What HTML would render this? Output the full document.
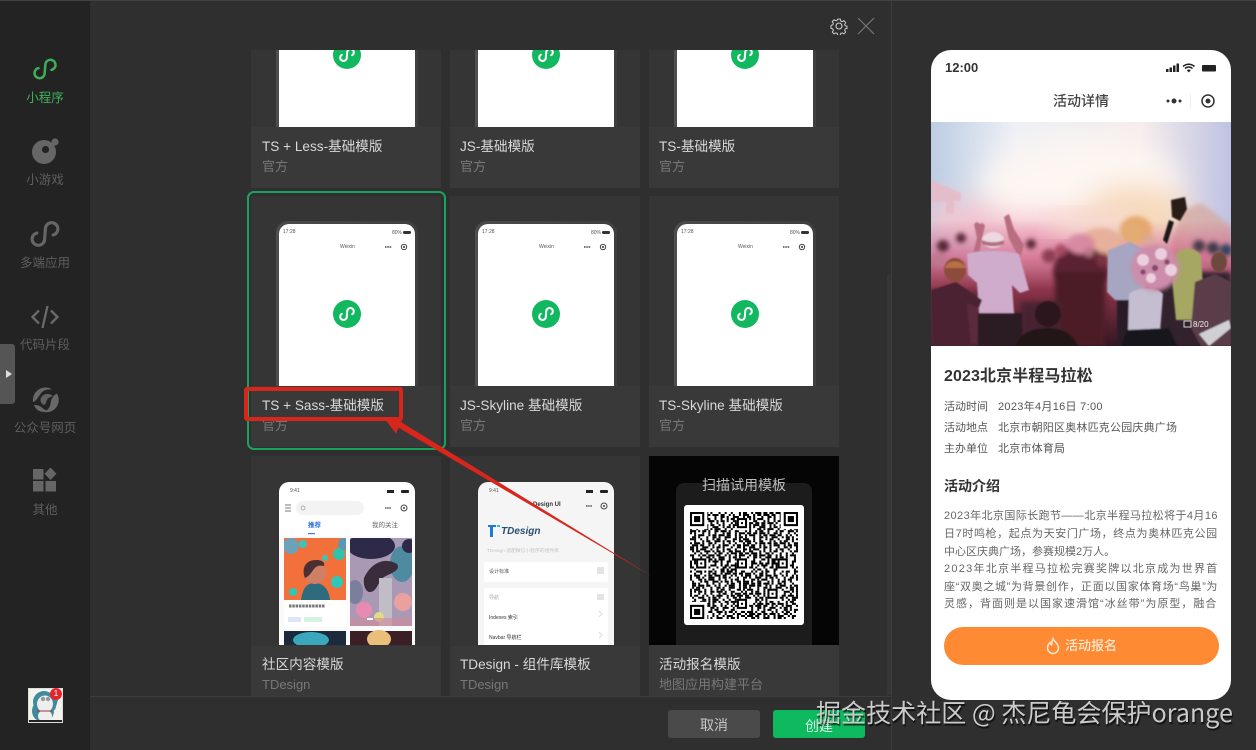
<!DOCTYPE html>
<html lang="zh"><head><meta charset="utf-8"><title>新建项目</title>
<style>
*{box-sizing:border-box;margin:0;padding:0}
html,body{width:1256px;height:750px;overflow:hidden;background:#2f2f2f;font-family:"Liberation Sans","Noto Sans CJK SC",sans-serif}
.a{position:absolute}
#side{left:0;top:0;width:90px;height:750px;background:#232323}
.si{position:absolute;left:0;width:90px;text-align:center;font-size:12.5px;color:#5e5e5e;line-height:16px}
.si svg{position:absolute}
#list{left:240px;top:50px;width:605px;height:646px;overflow:hidden}
.card{position:absolute;width:190px;height:251px;background:#393939;overflow:hidden}
.card .top{position:absolute;left:0;top:0;width:190px;height:190px;background:#353535}
.phone{position:absolute;left:25px;top:25px;width:142px;height:165px;background:linear-gradient(90deg,#525252 0,#4a4a4a 3px,#3f3f3f 100%);border-radius:12px 12px 0 0;padding:3px 3px 0}
.scr{position:relative;width:136px;height:162px;background:#fff;border-radius:10px 10px 0 0;overflow:hidden}
.t{position:absolute;left:11px;top:201px;font-size:13.6px;line-height:18px;color:#d8d8d8;white-space:nowrap}
.s{position:absolute;left:11px;top:221px;font-size:13px;line-height:18px;color:#787878;white-space:nowrap}
.c2 .t,.c2 .s{left:10px}
.r2 .t{top:200px}.r2 .s{top:220px}
.tiny{position:absolute;font-size:5px;line-height:6px;color:#555;white-space:nowrap}
.logo{position:absolute;left:54px;top:76px}
.p{position:absolute;color:#555;font-size:11px;line-height:21px;white-space:nowrap}
.b{position:absolute;left:13px;font-size:11px;line-height:17.7px;color:#666;white-space:nowrap}
</style></head><body>

<!-- sidebar -->
<div class="a" id="side"></div>
<div class="a" style="left:90px;top:0;width:801px;height:750px;background:#2f2f2f"></div>
<div class="a" style="left:891px;top:0;width:1px;height:750px;background:#3c3c3c"></div>
<div class="a" style="left:0;top:0;width:1256px;height:1px;background:#414141"></div>
<div class="a" style="left:887px;top:275px;width:4px;height:420px;background:#363636"></div>

<div class="si" style="top:90px;color:#3fb35a">小程序</div>
<svg class="a" style="left:32px;top:56px" width="26" height="26" viewBox="0 0 24 24" fill="none" stroke="#3fae57" stroke-width="2.3" stroke-linecap="round"><path d="M6 11.200A4.700 4.700 0 1 0 11.700 15.700L12.300 8.300A4.700 4.700 0 1 1 18 12.800"/></svg>

<div class="si" style="top:172px">小游戏</div>
<svg class="a" style="left:30px;top:136px" width="32" height="30" viewBox="0 0 32 30"><circle cx="14" cy="16" r="12" fill="#666"/><circle cx="15.500" cy="13.500" r="3.600" fill="#232323"/><circle cx="25" cy="6" r="3.600" fill="#666"/></svg>

<div class="si" style="top:255px">多端应用</div>
<svg class="a" style="left:30px;top:219px" width="30" height="30" viewBox="0 0 24 24" fill="none" stroke="#666" stroke-width="2.500" stroke-linecap="round"><path d="M5.500 11.200A5 5 0 1 0 11.700 16L12.300 8A5 5 0 1 1 18.500 12.800"/></svg>

<div class="si" style="top:337px">代码片段</div>
<svg class="a" style="left:30px;top:304px" width="30" height="26" viewBox="0 0 30 26" fill="none" stroke="#6a6a6a" stroke-width="2.300"><path d="M9 6.500L2.500 13 9 19.500M21 6.500L27.500 13 21 19.500M17.500 2L12.500 24"/></svg>

<div class="si" style="top:420px">公众号网页</div>
<svg class="a" style="left:31px;top:386px" width="28" height="28" viewBox="0 0 28 28" fill="#686868"><path d="M2 16C1 8 7 1.500 14.500 1.500c3 0 5 .8 6.500 2-5-.5-9 1-11.500 4.500C7 11 6 14.500 2 16z"/><path d="M26 7.500c2.500 4.500 2.300 10-.5 13.500-2.700 4-8 6-12.500 5 3.500-1.500 6-4.500 6.500-8 .4-4.500 2.500-8.500 6.500-10.500z"/><path d="M3 19c3.500-.3 6.500 1 9 3.500 1.500 1.300 3.500 2 5 2-2.500 1.500-6.500 2-9.500 0C5.500 23.500 4 21.500 3 19z"/><path d="M9.500 13c1-3.500 4.500-5.500 8-5 2 .3 3.300 1 4.500 2.500-3.500.2-5.500 2-6.500 4.500-.5 1.500-1 3-2 4-2.500-.5-4.500-3-4-6z" opacity=".9"/></svg>

<div class="si" style="top:502px">其他</div>
<svg class="a" style="left:32px;top:467px" width="26" height="26" viewBox="0 0 26 26" fill="#666"><rect x="1" y="2" width="10.500" height="10.500"/><rect x="1" y="14" width="10.500" height="10.500"/><rect x="13.500" y="14" width="10.500" height="10.500"/><path d="M18.500 0.500L24.500 6.800 18.500 13 12.500 6.800z"/></svg>

<div class="a" style="left:0;top:344px;width:15px;height:60px;background:#555;border-radius:0 3px 3px 0"></div>
<div class="a" style="left:6px;top:370px;width:0;height:0;border-left:6px solid #ddd;border-top:4px solid transparent;border-bottom:4px solid transparent"></div>

<!-- avatar -->
<div class="a" style="left:28px;top:688px;width:35px;height:35px;background:#f3f3ee;overflow:hidden;border:1px solid #ddd">
<svg width="33" height="33" viewBox="0 0 33 33"><ellipse cx="14" cy="22" rx="11" ry="11" fill="#3d8b9b"/><circle cx="15" cy="13" r="11" fill="#3d8b9b"/><ellipse cx="16" cy="15" rx="8" ry="8.500" fill="#eee"/><ellipse cx="16" cy="27" rx="7" ry="6" fill="#eee"/><circle cx="14" cy="10" r="2.200" fill="#999"/><circle cx="19" cy="10" r="2.200" fill="#999"/><path d="M8 22h15" stroke="#a33" stroke-width="1"/><path d="M26 10l-3 10 3 1 3-10z" fill="#3d8b9b"/><rect x="0" y="31" width="33" height="2" fill="#222"/></svg>
</div>
<div class="a" style="left:50px;top:688px;width:12px;height:12px;background:#e3242b;border-radius:50%;color:#fff;font-size:8px;line-height:12px;text-align:center">1</div>

<!-- header icons -->
<svg class="a" style="left:830px;top:17px" width="18" height="18" viewBox="0 0 18 18" fill="none" stroke="#cfcfcf" stroke-width="1.100"><path d="M7.500 1.200h3l.5 2.200 1.600.7 2-1.200 2 2.200-1.200 1.900.6 1.700 2.100.5v0 2.600l-2.100.5-.6 1.700 1.200 1.900-2 2-2-1.100-1.600.6-.5 2.200h-3l-.5-2.200-1.600-.6-2 1.100-2-2 1.200-1.900-.7-1.700-2-.5V8.200l2-.5.7-1.700L1.300 4.100l2-2.200 2 1.200 1.600-.7z" transform="translate(1.100 1.100) scale(.88)"/><circle cx="9" cy="9" r="3"/></svg>
<svg class="a" style="left:857px;top:17px" width="18" height="18" viewBox="0 0 18 18" stroke="#777" stroke-width="1.100"><path d="M1 1L17 17M17 1L1 17"/></svg>

<!-- cards -->
<div class="a" id="list">
<svg width="0" height="0" style="position:absolute"><defs>
<g id="lg"><circle cx="14" cy="14" r="14" fill="#11b85f"/><path d="M8.800 13.800A3.300 3.300 0 1 0 13.800 16.600L14.200 11.400A3.300 3.300 0 1 1 19.200 14.200" fill="none" stroke="#fff" stroke-width="2" stroke-linecap="round"/></g>
<g id="hd"><rect x="124" y="7" width="8" height="3" fill="#333" rx="1.200"/><circle cx="125" cy="23" r="2.700" fill="none" stroke="#333" stroke-width=".9"/><circle cx="125" cy="23" r="1" fill="#333"/><path d="M106 23h7" stroke="#222" stroke-width="1.300" stroke-dasharray="1.500 .8"/></g>
</defs></svg>

<!-- row 0 -->
<div class="card" style="left:11px;top:-113px"><div class="top"></div><div class="phone"><div class="scr"><svg class="logo" width="28" height="28"><use href="#lg"/></svg></div></div><div class="t">TS + Less-基础模版</div><div class="s">官方</div></div>
<div class="card c2" style="left:210px;top:-113px"><div class="top"></div><div class="phone"><div class="scr"><svg class="logo" width="28" height="28"><use href="#lg"/></svg></div></div><div class="t">JS-基础模版</div><div class="s">官方</div></div>
<div class="card c2" style="left:409px;top:-113px"><div class="top"></div><div class="phone"><div class="scr"><svg class="logo" width="28" height="28"><use href="#lg"/></svg></div></div><div class="t">TS-基础模版</div><div class="s">官方</div></div>

<!-- row 1 -->
<div class="card" style="left:11px;top:146px"><div class="top"></div><div class="phone"><div class="scr"><div class="tiny" style="left:4px;top:5px">17:28</div><div class="tiny" style="left:61px;top:20px">Weixin</div><div class="tiny" style="left:113px;top:6px">80%</div><svg width="136" height="30" style="position:absolute;left:0;top:0"><use href="#hd"/></svg><svg class="logo" width="28" height="28"><use href="#lg"/></svg></div></div><div class="t">TS + Sass-基础模版</div><div class="s">官方</div></div>
<div class="card c2" style="left:210px;top:146px"><div class="top"></div><div class="phone"><div class="scr"><div class="tiny" style="left:4px;top:5px">17:28</div><div class="tiny" style="left:61px;top:20px">Weixin</div><div class="tiny" style="left:113px;top:6px">80%</div><svg width="136" height="30" style="position:absolute;left:0;top:0"><use href="#hd"/></svg><svg class="logo" width="28" height="28"><use href="#lg"/></svg></div></div><div class="t">JS-Skyline 基础模版</div><div class="s">官方</div></div>
<div class="card c2" style="left:409px;top:146px"><div class="top"></div><div class="phone"><div class="scr"><div class="tiny" style="left:4px;top:5px">17:28</div><div class="tiny" style="left:61px;top:20px">Weixin</div><div class="tiny" style="left:113px;top:6px">80%</div><svg width="136" height="30" style="position:absolute;left:0;top:0"><use href="#hd"/></svg><svg class="logo" width="28" height="28"><use href="#lg"/></svg></div></div><div class="t">TS-Skyline 基础模版</div><div class="s">官方</div></div>
<div class="a" style="left:7px;top:141px;width:199px;height:259px;border:2px solid #1aa35c;border-radius:7px"></div>

<!-- row 2 -->
<div class="card r2" style="left:11px;top:406px"><div class="top"></div><div class="scr" style="position:absolute;left:28px;top:26px;height:163px">
<div class="tiny" style="left:11px;top:6px">9:41</div>
<svg width="136" height="163" style="position:absolute;left:0;top:0" viewBox="0 0 136 163">
<rect x="108" y="8" width="7" height="3" fill="#222"/><rect x="122" y="8" width="8" height="3" rx="1" fill="#222"/>
<path d="M6 23h6M6 26h6M6 29h6" stroke="#777" stroke-width=".9"/>
<rect x="17" y="19" width="68" height="14" rx="7" fill="#f3f3f3"/><circle cx="24" cy="26" r="2" fill="none" stroke="#999" stroke-width=".7"/>
<path d="M106 26h6" stroke="#333" stroke-width="1.300" stroke-dasharray="1.500 .7"/><circle cx="125" cy="26" r="3" fill="none" stroke="#444"/><circle cx="125" cy="26" r="1" fill="#444"/>
<rect x="29" y="51" width="7" height="1.200" fill="#3b78e8"/>
<rect x="0" y="54" width="136" height="109" fill="#fafafa"/>
<g><clipPath id="c1"><rect x="5" y="56" width="62" height="62"/></clipPath>
<rect x="5" y="56" width="62" height="62" fill="#f2703a"/>
<g clip-path="url(#c1)"><circle cx="12" cy="64" r="8" fill="#6ca2b9"/><circle cx="24" cy="62" r="4" fill="#3cc4b9"/><circle cx="60" cy="72" r="6" fill="#2fc3ae"/><circle cx="58" cy="100" r="6" fill="#2ec8b8"/><circle cx="14" cy="110" r="4" fill="#2ec8b8"/><circle cx="46" cy="76" r="3" fill="#3cc4b9"/><circle cx="65" cy="62" r="6" fill="#5b97b5"/>
<path d="M22 118c2-13 6-17 14-17s14 6 15 17z" fill="#2d6b7d"/><ellipse cx="36" cy="91" rx="11" ry="11" fill="#cf7f66"/><path d="M26 96c-4-10 1-18 11-18 7 0 9 3 8 6-5-1-8 0-10 3-2 2-4 7-9 9z" fill="#4a2f34"/></g></g>
<rect x="5" y="118" width="62" height="27" fill="#fff"/>
<path d="M10 124h36" stroke="#777" stroke-width="3" stroke-dasharray="2.500 .8"/>
<rect x="9" y="135" width="13" height="5" fill="#dbe6fa"/><rect x="25" y="135" width="18" height="5" fill="#d5f2df"/>
<g><clipPath id="c2"><rect x="71" y="56" width="62" height="88"/></clipPath>
<rect x="71" y="56" width="62" height="88" fill="#a999b5"/>
<g clip-path="url(#c2)"><ellipse cx="92" cy="64" rx="24" ry="13" fill="#2c2a48"/><ellipse cx="123" cy="82" rx="12" ry="18" fill="#4e8ba0"/><circle cx="130" cy="64" r="7" fill="#2c2a48"/><path d="M85 96c6-14 20-22 33-14 4 6-5 9-13 13-6 4-7 16-15 15-4-1-6-8-5-14z" fill="#3a2c3a"/><rect x="100" y="96" width="13" height="48" fill="#c0bdc6"/><circle cx="85" cy="128" r="8" fill="#e88bb0"/><circle cx="124" cy="120" r="9" fill="#e9a09f"/><circle cx="100" cy="135" r="5" fill="#e2dc86"/><ellipse cx="76" cy="110" rx="8" ry="12" fill="#7a7f9b"/><rect x="71" y="136" width="62" height="8" fill="#d18a9a" opacity=".6"/><rect x="88" y="136" width="6" height="2" fill="#fff"/></g></g>
<rect x="5" y="149" width="62" height="14" fill="#1c2a3e"/><ellipse cx="32" cy="158" rx="18" ry="8" fill="#3aa7bd"/>
<rect x="71" y="149" width="62" height="14" fill="#3a2024"/><ellipse cx="100" cy="157" rx="12" ry="9" fill="#eabf7b"/>
</svg>
<div class="tiny" style="left:29px;top:41px;color:#2a6fe0;font-size:6.500px;font-weight:bold">推荐</div>
<div class="tiny" style="left:93px;top:41px;font-size:6.500px;color:#666">我的关注</div>
</div><div class="t">社区内容模版</div><div class="s">TDesign</div></div>

<div class="card c2 r2" style="left:210px;top:406px"><div class="top"></div><div class="scr" style="position:absolute;left:28px;top:26px;height:163px;background:#f5f5f5">
<div class="tiny" style="left:11px;top:6px">9:41</div>
<div class="tiny" style="left:55px;top:20px;font-size:6px;color:#333;font-weight:bold">Design UI</div>
<svg width="136" height="163" style="position:absolute;left:0;top:0" viewBox="0 0 136 163">
<rect x="108" y="8" width="7" height="3" fill="#222"/><rect x="122" y="8" width="8" height="3" rx="1" fill="#222"/>
<path d="M108 24h6" stroke="#333" stroke-width="1.300" stroke-dasharray="1.500 .7"/><circle cx="126" cy="24" r="3" fill="none" stroke="#444"/><circle cx="126" cy="24" r="1" fill="#444"/>
<path d="M10 43h8v2h-3v10h-3V45h-2z" fill="#1e7ad6"/><path d="M19 43h3v2h-3z" fill="#2ec8b8"/>
<rect x="6" y="80" width="124" height="20" rx="2" fill="#fff"/><rect x="6" y="106" width="124" height="57" rx="2" fill="#fff"/>
<rect x="119" y="85" width="7" height="7" fill="#e3e3e3"/><rect x="119" y="112" width="7" height="6" fill="#e3e3e3"/>
<path d="M121 129l3 3-3 3M121 150l3 3-3 3" fill="none" stroke="#ddd"/>
</svg>
<div class="tiny" style="left:23px;top:44px;font-size:10px;line-height:12px;color:#2b4f72;font-style:italic;font-weight:bold">TDesign</div>
<div class="tiny" style="left:9px;top:67px;font-size:4.800px;color:#c4c4c4">TDesign 适配微信小程序的组件库</div>
<div class="tiny" style="left:11px;top:87px;font-size:5px">设计标准</div>
<div class="tiny" style="left:11px;top:113px;font-size:5px;color:#aaa">导航</div>
<div class="tiny" style="left:11px;top:133px;font-size:5px;color:#333">Indexes 索引</div>
<div class="tiny" style="left:11px;top:153px;font-size:5px;color:#333">Navbar 导航栏</div>
</div><div class="t">TDesign - 组件库模板</div><div class="s">TDesign</div></div>

<div class="card c2 r2" style="left:409px;top:406px"><div class="top" style="height:189px;background:#050505"></div>
<div class="a" style="left:27px;top:27px;width:136px;height:162px;background:#1c1c1c;border-radius:8px 8px 0 0"></div>
<div class="a" style="left:0;top:20px;width:190px;text-align:center;color:#bdbdbd;font-size:14px;line-height:18px">扫描试用模板</div>
<div class="a" style="left:35px;top:49px;width:120px;height:120px;background:#fff;border-radius:3px"></div>
<svg class="a" style="left:41px;top:56px" width="108" height="107" viewBox="0 0 53 53" preserveAspectRatio="none">
<g fill="none" stroke="#000" stroke-width="1">
<path stroke-dasharray="2 1 3 1 1 2 2 1 1 3 1 2 1" d="M-3 .5H53M-7 5.500H53M-11 10.500H53M-1 15.500H53M-15 20.500H53M-5 25.500H53M-18 30.500H53M-9 35.500H53M-13 40.500H53M-2 45.500H53M-6 50.500H53"/>
<path stroke-dasharray="1 2 1 1 3 2 1 1 2 1 3 1 2 2 1 1" d="M-4 1.500H53M-9 6.500H53M-1 11.500H53M-14 16.500H53M-6 21.500H53M-20 26.500H53M-3 31.500H53M-11 36.500H53M-17 41.500H53M-8 46.500H53M-12 51.500H53"/>
<path stroke-dasharray="3 2 1 1 2 1 1 3 1 2 2 1 1 2" d="M-2 2.500H53M-12 7.500H53M-6 12.500H53M-17 17.500H53M-9 22.500H53M-1 27.500H53M-14 32.500H53M-4 37.500H53M-19 42.500H53M-7 47.500H53M-10 52.500H53"/>
<path stroke-dasharray="1 1 2 2 1 3 2 1 1 1 3 2 1 2 1 2" d="M-8 3.500H53M-3 8.500H53M-15 13.500H53M-10 18.500H53M-1 23.500H53M-21 28.500H53M-6 33.500H53M-13 38.500H53M-4 43.500H53M-16 48.500H53"/>
<path stroke-dasharray="2 2 1 3 1 1 2 2 3 1 1 1 2 1 1" d="M-5 4.500H53M-14 9.500H53M-2 14.500H53M-7 19.500H53M-18 24.500H53M-11 29.500H53M-3 34.500H53M-16 39.500H53M-9 44.500H53M-1 49.500H53"/>
</g>
<g fill="#fff"><rect width="8.500" height="8.500"/><rect x="44.500" width="8.500" height="8.500"/><rect y="44.500" width="8.500" height="8.500"/><rect x="38" y="38" width="6" height="6"/><rect x="23" y="23" width="6" height="6"/><rect x="23" y="3" width="6" height="6"/><rect x="3" y="23" width="6" height="6"/><rect x="43" y="23" width="6" height="6"/><rect x="23" y="43" width="6" height="6"/></g>
<g fill="none" stroke="#000" stroke-width="1"><rect x=".5" y=".5" width="6" height="6"/><rect x="46.500" y=".5" width="6" height="6"/><rect x=".5" y="46.500" width="6" height="6"/><rect x="38.500" y="38.500" width="4" height="4"/><rect x="23.500" y="23.500" width="4" height="4"/><rect x="23.500" y="3.500" width="4" height="4"/><rect x="3.500" y="23.500" width="4" height="4"/><rect x="43.500" y="23.500" width="4" height="4"/><rect x="23.500" y="43.500" width="4" height="4"/></g>
<rect x="2" y="2" width="3" height="3"/><rect x="48" y="2" width="3" height="3"/><rect x="2" y="48" width="3" height="3"/><rect x="40" y="40" width="1" height="1"/><rect x="25" y="25" width="1" height="1"/><rect x="25" y="5" width="1" height="1"/><rect x="5" y="25" width="1" height="1"/><rect x="45" y="25" width="1" height="1"/><rect x="25" y="45" width="1" height="1"/>
</svg>
<div class="t">活动报名模版</div><div class="s">地图应用构建平台</div></div>
</div>

<!-- footer -->
<div class="a" style="left:90px;top:696px;width:801px;height:54px;background:#2f2f2f;border-top:1px solid #3d3d3d"></div>
<div class="a" style="left:668px;top:710px;width:92px;height:28px;background:#4a4a4a;border-radius:3px;color:#c8c8c8;font-size:14px;line-height:30px;text-align:center">取消</div>
<div class="a" style="left:773px;top:710px;width:92px;height:28px;background:#0fb960;border-radius:3px;color:#d8f2e2;font-size:14px;line-height:32px;text-align:center">创建</div>

<!-- annotation -->
<div class="a" style="left:244px;top:387px;width:159px;height:34px;border:4px solid #d9261c;border-radius:3px"></div>
<svg class="a" style="left:380px;top:410px" width="280" height="180" viewBox="380 410 280 180"><path d="M385 419L403 421.800 401.500 422.400 653 577 398.500 427.600 396 433.800z" fill="#d9261c"/></svg>

<!-- preview -->
<div class="a" style="left:931px;top:50px;width:300px;height:650px;background:#fff;border-radius:20px;overflow:hidden">
<div class="a" style="left:14px;top:10px;font-size:13px;line-height:16px;color:#333;font-weight:bold">12:00</div>
<svg class="a" style="left:235px;top:12px" width="52" height="12" viewBox="0 0 52 12" fill="#222"><rect x="0" y="7" width="2.500" height="3"/><rect x="3.500" y="5.500" width="2.500" height="4.500"/><rect x="7" y="3.500" width="2.500" height="6.500"/><rect x="10.500" y="1.500" width="2.500" height="8.500"/><path d="M17 4.500c3.500-3 8-3 11.500 0M19 6.500c2.300-2 5.300-2 7.500 0" fill="none" stroke="#222" stroke-width="1.500"/><path d="M20.800 8.200c1.200-1 2.800-1 4 0L22.800 10.500z"/><rect x="36" y="3" width="14" height="6.500" rx="1"/></svg>
<div class="a" style="left:0;top:41px;width:300px;text-align:center;font-size:14px;line-height:20px;color:#444;font-weight:500">活动详情</div>
<svg class="a" style="left:233px;top:40px" width="62" height="22" viewBox="0 0 62 22"><circle cx="4" cy="11" r="1.500" fill="#333"/><circle cx="10" cy="11" r="2.500" fill="#333"/><circle cx="16" cy="11" r="1.500" fill="#333"/><path d="M26.500 3v16" stroke="#eee"/><circle cx="44" cy="11" r="6" fill="none" stroke="#333" stroke-width="1.500"/><circle cx="44" cy="11" r="2.500" fill="#333"/></svg>

<svg class="a" style="left:0;top:72px" width="300" height="224" viewBox="0 0 300 224">
<defs>
<linearGradient id="sky" x1="0" x2="1" y1="0" y2="0"><stop offset="0" stop-color="#bccde3"/><stop offset=".28" stop-color="#eef0f5"/><stop offset=".7" stop-color="#f6eeec"/><stop offset="1" stop-color="#bfc2e2"/></linearGradient>
<linearGradient id="low" x1="0" x2="0" y1="0" y2="1"><stop offset="0" stop-color="#d8608a" stop-opacity="0"/><stop offset=".3" stop-color="#cf5a7e" stop-opacity=".75"/><stop offset=".55" stop-color="#8c3449"/><stop offset="1" stop-color="#321722"/></linearGradient>
<filter id="b8"><feGaussianBlur stdDeviation="14"/></filter>
<filter id="b2"><feGaussianBlur stdDeviation="2.500"/></filter>
<filter id="b1"><feGaussianBlur stdDeviation=".8"/></filter>
</defs>
<rect width="300" height="224" fill="url(#sky)"/>
<g filter="url(#b8)">
<ellipse cx="150" cy="62" rx="100" ry="45" fill="#fdf6f2"/>
<ellipse cx="205" cy="95" rx="55" ry="32" fill="#f6d9bb"/>
<ellipse cx="30" cy="100" rx="45" ry="22" fill="#f2c4d0"/>
<ellipse cx="110" cy="112" rx="70" ry="18" fill="#f4bccb"/>
</g>
<path d="M240 118l12-30 18-7 14 10 16 14v30h-60z" fill="#d5a8a0" opacity=".75" filter="url(#b2)"/>
<rect y="98" width="300" height="126" fill="url(#low)"/>
<ellipse cx="160" cy="100" rx="45" ry="14" fill="#f7ddd0" filter="url(#b8)"/>
<path d="M0 58l30 13v8H23v12h-8V80H0z" fill="#e6bcc8" filter="url(#b1)" opacity=".9"/>
<g filter="url(#b2)">
<ellipse cx="170" cy="122" rx="22" ry="16" fill="#e6b09a"/>
<ellipse cx="205" cy="108" rx="16" ry="14" fill="#e6a870"/>
<ellipse cx="150" cy="150" rx="28" ry="26" fill="#5a2230"/>
<ellipse cx="150" cy="122" rx="14" ry="10" fill="#d88aa2"/>
<path d="M124 150h50v74h-50z" fill="#4c1c28"/>
<path d="M228 150h72v74h-72z" fill="#33222e"/>
<path d="M0 170h60v54H0z" fill="#5c2c3c"/>
<path d="M90 180h40v44H90z" fill="#4a2230"/>
<g fill="#5a2838">
<circle cx="12" cy="124" r="6"/><circle cx="30" cy="116" r="5"/><circle cx="100" cy="122" r="5"/><circle cx="118" cy="134" r="7" fill="#8c3c50"/><circle cx="130" cy="128" r="6" fill="#a84a62"/><circle cx="158" cy="130" r="5" fill="#c07888"/><circle cx="172" cy="138" r="7" fill="#7a3040"/><circle cx="268" cy="124" r="6" fill="#4a3a48"/><circle cx="282" cy="126" r="6" fill="#3a3a48"/><circle cx="295" cy="128" r="6" fill="#30445e"/><circle cx="8" cy="138" r="7" fill="#c07890"/><circle cx="218" cy="118" r="6" fill="#dca898"/>
</g></g>
<g filter="url(#b1)">
<path d="M42 132l4-16-3-14 3-2 3 2 3-1 2 3-3 12-3 18zM73 95l5-3 5 15 10 16-4 14-11-20z" fill="#b86e80"/>
<path d="M36 132c10-4 38-4 52 0l10 36-9 3-8-8 2 28H48l-2-30-9-8z" fill="#cfaccb"/>
<ellipse cx="62" cy="118" rx="11" ry="8" fill="#ecd8de"/><path d="M51 118c7 3 15 3 22 0v4c-7 3-15 3-22 0z" fill="#b0707f"/>
<path d="M47 191h44v33H47z" fill="#2c1a22"/>
<path d="M0 168l25-8 26 18-3 8-12-5 4 43H2z" fill="#4c2230"/>
<ellipse cx="24" cy="148" rx="11" ry="12" fill="#8c4c3a"/><path d="M14 146c2-9 17-9 21 0z" fill="#b87048"/>
<circle cx="117" cy="192" r="13" fill="#2a181c"/><path d="M84 224c6-14 18-18 33-18s25 6 30 18z" fill="#241518"/>
<path d="M177 128l22-8 18 10-3 48h-30l-8-8z" fill="#a6a6c2"/><ellipse cx="201" cy="110" rx="9" ry="10" fill="#e2ac72"/>
<path d="M186 178h18v46h-18z" fill="#2a1c26"/>
<path d="M232 118l6-20 5 2-7 22z" fill="#1d1519"/><path d="M240 78l14-3 2 12-7 12-8-4z" fill="#2b1e18"/>
<path d="M198 172c10-8 28-8 34 0l-3 38h-32z" fill="#c4bed0"/><path d="M190 224l6-16 42-2 8 18z" fill="#16181e"/>
<path d="M246 130c8-6 20-4 24 4l3 46-10 18h-18l-4-40z" fill="#a5a764"/>
<path d="M264 160l20-8 16 8v64h-30l-10-18z" fill="#5a3e48"/><ellipse cx="288" cy="140" rx="8" ry="10" fill="#6d4a3c"/>
<path d="M268 212l30-14 2 8-22 18z" fill="#d0d0d4"/>
</g>
<ellipse cx="224" cy="146" rx="24" ry="23" fill="#cc8daa" filter="url(#b2)"/>
<g fill="#eccfde" filter="url(#b1)"><circle cx="212" cy="138" r="6"/><circle cx="230" cy="132" r="6"/><circle cx="240" cy="148" r="6"/><circle cx="220" cy="156" r="5"/></g>
<g fill="#84466a" filter="url(#b1)"><circle cx="224" cy="146" r="3"/><circle cx="236" cy="140" r="2.500"/><circle cx="212" cy="150" r="2.500"/></g>
<text x="262" y="205" font-size="8" fill="#eaeaea" font-family="Liberation Sans, sans-serif">8/20</text>
<rect x="253" y="199" width="7" height="6" fill="none" stroke="#eaeaea" stroke-width=".9"/>
</svg>

<div class="a" style="left:13px;top:316px;font-size:16px;letter-spacing:.1px;line-height:22px;color:#333;font-weight:bold;white-space:nowrap">2023北京半程马拉松</div>
<div class="p" style="left:13px;top:347px">活动时间</div><div class="p" style="left:67px;top:347px;letter-spacing:.3px">2023年4月16日 7:00</div>
<div class="p" style="left:13px;top:368px">活动地点</div><div class="p" style="left:67px;top:368px;letter-spacing:.2px">北京市朝阳区奥林匹克公园庆典广场</div>
<div class="p" style="left:13px;top:389px">主办单位</div><div class="p" style="left:67px;top:389px;letter-spacing:.2px">北京市体育局</div>
<div class="a" style="left:13px;top:425px;font-size:14px;line-height:22px;color:#333;font-weight:bold">活动介绍</div>
<div class="b" style="top:458px;letter-spacing:.41px">2023年北京国际长跑节——北京半程马拉松将于4月16</div>
<div class="b" style="top:476px;letter-spacing:.61px">日7时鸣枪，起点为天安门广场，终点为奥林匹克公园</div>
<div class="b" style="top:494px">中心区庆典广场，参赛规模2万人。</div>
<div class="b" style="top:511px;letter-spacing:1.25px">2023年北京半程马拉松完赛奖牌以北京成为世界首</div>
<div class="b" style="top:529px;letter-spacing:.67px">座“双奥之城”为背景创作，正面以国家体育场“鸟巢”为</div>
<div class="b" style="top:546px;letter-spacing:1px">灵感，背面则是以国家速滑馆“冰丝带”为原型，融合</div>
<div class="a" style="left:13px;top:577px;width:275px;height:38px;background:#fe8a33;border-radius:19px"></div>
<svg class="a" style="left:115px;top:587px" width="14" height="18" viewBox="0 0 14 18" fill="none" stroke="#ffe7d2" stroke-width="1.500"><path d="M7 1.500c1 3 5.500 5 5.500 9.500a5.500 5.500 0 0 1-11 0c0-2.500 1-4 2.500-5.500.3 1.500 1 2 1.500 2.300C5.800 5.500 6 3.500 7 1.500z"/></svg>
<div class="a" style="left:134px;top:587px;font-size:13px;line-height:18px;color:#ffe7d2;font-weight:500">活动报名</div>
</div>

<!-- watermark -->
<div class="a" style="left:816px;top:694px;font-family:'Noto Sans CJK SC','Liberation Sans',sans-serif;font-size:25px;letter-spacing:.05px;line-height:36px;color:#cbcbcb;text-shadow:1px 2px 1px rgba(0,0,0,.7);white-space:nowrap">掘金技术社区 @ 杰尼龟会保护orange</div>

</body></html>
